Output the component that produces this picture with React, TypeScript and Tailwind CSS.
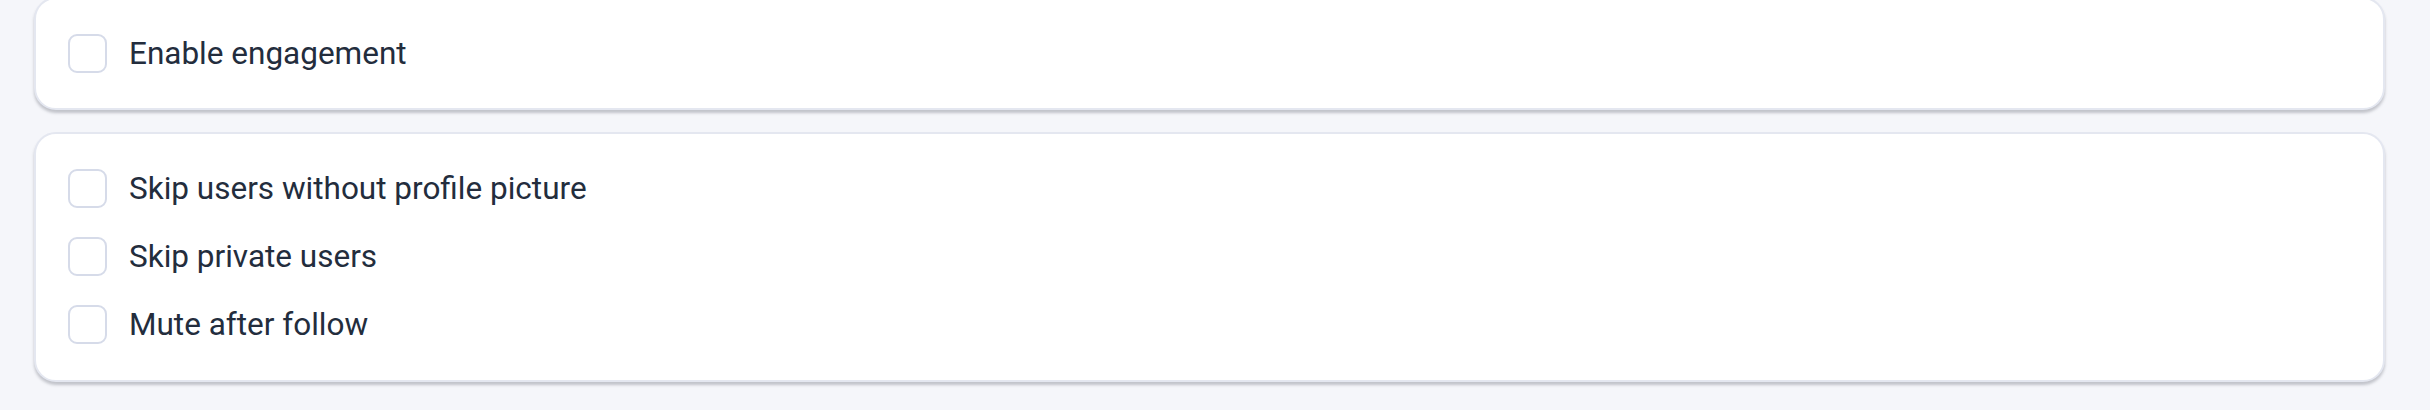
import React from "react";

const Checkbox = ({ label }: { label: string }) => (
  <label className="flex items-center gap-[22px] cursor-pointer">
    <span className="w-[39px] h-[39px] shrink-0 rounded-[9px] border-2 border-[#d6dbe9] bg-white" />
    <span className="text-[31.5px] leading-[39px] text-[#232d3d]">{label}</span>
  </label>
);

const Card = ({ children, className = "" }: { children: React.ReactNode; className?: string }) => (
  <div
    className={`bg-white rounded-[22px] border-2 border-[#e4e7f0] shadow-[0_3px_3px_rgba(60,64,80,0.28)] px-[32px] pt-[35px] ${className}`}
  >
    {children}
  </div>
);

export default function App() {
  return (
    <div
      className="min-h-[410px] bg-[#f5f6fa] pl-[34px] pr-[45px] overflow-hidden"
      style={{ fontFamily: "Roboto, 'Liberation Sans', sans-serif" }}
    >
      <div className="-mt-[3px] flex flex-col gap-[22px]">
        <Card className="pb-[35px]">
          <Checkbox label="Enable engagement" />
        </Card>
        <Card className="pb-[36px]">
          <div className="flex flex-col gap-[29px]">
            <Checkbox label="Skip users without profile picture" />
            <Checkbox label="Skip private users" />
            <Checkbox label="Mute after follow" />
          </div>
        </Card>
      </div>
    </div>
  );
}
